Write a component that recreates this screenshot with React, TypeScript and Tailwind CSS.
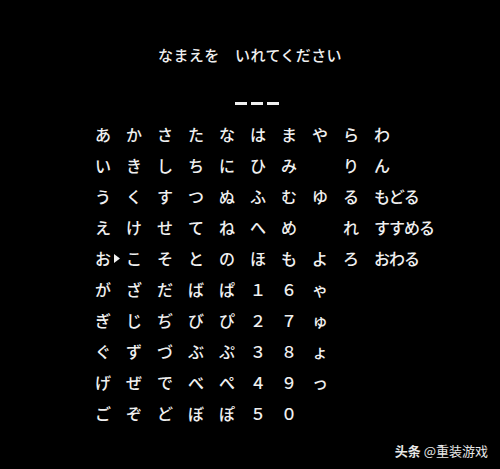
const ROWS: string[][] = [
  ["あ", "か", "さ", "た", "な", "は", "ま", "や", "ら", "わ"],
  ["い", "き", "し", "ち", "に", "ひ", "み", "", "り", "ん"],
  ["う", "く", "す", "つ", "ぬ", "ふ", "む", "ゆ", "る", "もどる"],
  ["え", "け", "せ", "て", "ね", "へ", "め", "", "れ", "すすめる"],
  ["お", "こ", "そ", "と", "の", "ほ", "も", "よ", "ろ", "おわる"],
  ["が", "ざ", "だ", "ば", "ぱ", "１", "６", "ゃ", "", ""],
  ["ぎ", "じ", "ぢ", "び", "ぴ", "２", "７", "ゅ", "", ""],
  ["ぐ", "ず", "づ", "ぶ", "ぷ", "３", "８", "ょ", "", ""],
  ["げ", "ぜ", "で", "べ", "ぺ", "４", "９", "っ", "", ""],
  ["ご", "ぞ", "ど", "ぼ", "ぽ", "５", "０", "", "", ""],
];

// cursor sits just before こ
const CURSOR = { row: 4, col: 1 };

function Cursor() {
  return (
    <svg
      className="absolute left-[-4px] top-[11px]"
      width="6"
      height="9"
      viewBox="0 0 6 9"
    >
      <polygon points="0,0 6,4.5 0,9" fill="#f2f2f2" />
    </svg>
  );
}

function App() {
  return (
    <div className="relative h-[469px] w-[500px] overflow-hidden bg-black text-[#f0f0f0] font-['Noto_Sans_CJK_JP',sans-serif] font-medium">
      {/* 見出し */}
      <div className="pt-[45px] text-center text-[15px] leading-[20px] tracking-[0.4px]">
        なまえを　いれてください
      </div>

      {/* 名前の入力欄 */}
      <div className="ml-[235px] mt-[37px] flex gap-[4px]">
        <span className="h-[3px] w-[12px] bg-[#f0f0f0]" />
        <span className="h-[3px] w-[12px] bg-[#f0f0f0]" />
        <span className="h-[3px] w-[12px] bg-[#f0f0f0]" />
      </div>

      {/* 文字表 */}
      <div className="ml-[87px] mt-[14px] grid grid-cols-[repeat(10,31px)] auto-rows-[31px] text-[16px] leading-[31px] tracking-[-1px]">
        {ROWS.map((row, r) =>
          row.map((ch, c) => (
            <div
              key={`${r}-${c}`}
              className="relative whitespace-nowrap pl-[8px]"
            >
              {r === CURSOR.row && c === CURSOR.col && <Cursor />}
              {ch}
            </div>
          )),
        )}
      </div>

      {/* 透かし */}
      <div className="absolute bottom-[9px] right-[12px] text-[13px] leading-[18px] text-[#e8e8e8] font-['Noto_Sans_CJK_SC',sans-serif]">
        <span className="font-bold">头条</span>
        <span className="font-normal"> @重装游戏</span>
      </div>
    </div>
  );
}

export default App;
